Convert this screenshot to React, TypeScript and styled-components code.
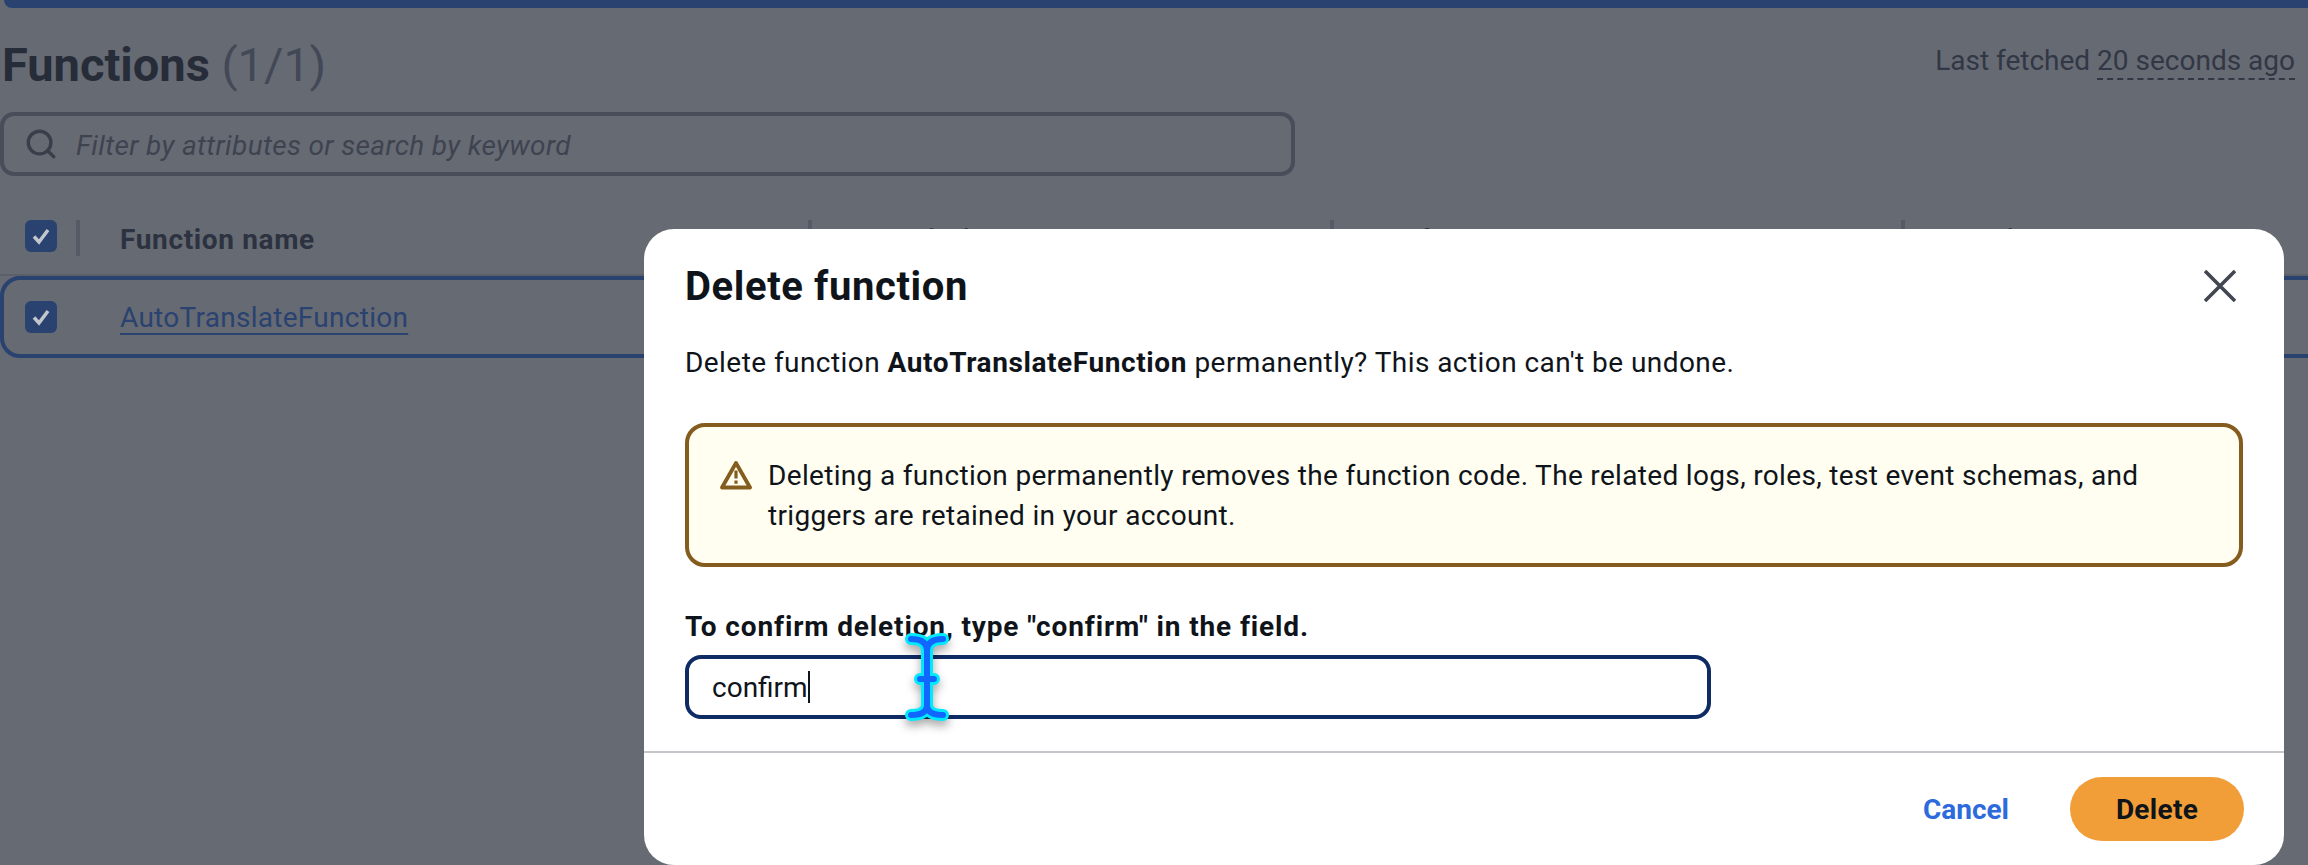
import styled, { createGlobalStyle } from 'styled-components';
import { Search } from 'lucide-react';

const GlobalStyle = createGlobalStyle`
  html, body {
    margin: 0;
    padding: 0;
    background: #666a73;
  }
  * {
    box-sizing: border-box;
  }
`;

const Page = styled.div`
  position: relative;
  width: 2308px;
  height: 865px;
  overflow: hidden;
  background: #666a73;
  font-family: Roboto, "Noto Sans", sans-serif;
  font-size: 28px;
  color: #16191f;
`;

const TopBar = styled.div`
  height: 8px;
  margin-left: 4px;
  background: #2a4270;
  border-bottom-left-radius: 8px;
`;

const HeaderRow = styled.div`
  display: flex;
  justify-content: space-between;
  align-items: flex-start;
  height: 104px;
  padding: 32px 13px 0 2px;
`;

const PageTitle = styled.h1`
  margin: 0;
  font-size: 47px;
  line-height: 50px;
  font-weight: 700;
  color: #262c38;
`;

const Count = styled.span`
  font-weight: 400;
  color: #434856;
`;

const Fetched = styled.div`
  padding-top: 1px;
  line-height: 40px;
  color: #323745;
`;

const Dashed = styled.span`
  border-bottom: 2px dashed #323745;
  padding-bottom: 1px;
`;

const SearchBox = styled.div`
  display: flex;
  align-items: center;
  gap: 18px;
  width: 1295px;
  height: 64px;
  padding: 0 20px;
  border: 4px solid #494d59;
  border-radius: 14px;
  svg {
    color: #3a3e4a;
    flex: none;
  }
`;

const Placeholder = styled.span`
  padding-top: 2px;
  font-style: italic;
  letter-spacing: 0.35px;
  color: #3f4350;
`;

const HeadRow = styled.div`
  display: grid;
  grid-template-columns: 76px 732px 522px 571px 1fr;
  height: 56px;
  margin-top: 44px;
  border-bottom: 2px solid #5b5f68;
`;

const HeadCell = styled.div`
  height: 36px;
  padding-left: 40px;
  border-left: 4px solid #565a66;
  font-weight: 700;
  line-height: 39px;
  letter-spacing: 0.65px;
  color: #2c3240;
`;

const CheckCell = styled.div`
  padding-left: 25px;
`;

const Check = styled.div`
  display: flex;
  align-items: center;
  justify-content: center;
  width: 32px;
  height: 32px;
  border-radius: 6px;
  background: #2a4270;
`;

const SelectedRow = styled.div`
  display: flex;
  align-items: center;
  height: 82px;
  margin-right: -20px;
  padding-left: 25px;
  border: 4px solid #2a4270;
  border-radius: 20px;
`;

const RowCheck = styled(Check)`
  margin-left: -4px;
  margin-right: 63px;
`;

const FnLink = styled.a`
  color: #2a4270;
  letter-spacing: 0.28px;
  text-decoration: underline;
  text-underline-offset: 6px;
  text-decoration-thickness: 2px;
`;

const Modal = styled.div`
  position: absolute;
  left: 644px;
  top: 229px;
  width: 1640px;
  height: 636px;
  display: flex;
  flex-direction: column;
  background: #fff;
  border-radius: 30px;
`;

const ModalHead = styled.div`
  display: flex;
  justify-content: space-between;
  align-items: center;
  height: 114px;
  padding: 0 48px 0 41px;
`;

const ModalTitle = styled.h2`
  margin: 0;
  font-size: 40px;
  font-weight: 700;
  letter-spacing: 0.6px;
  color: #0f141a;
`;

const ModalBody = styled.div`
  flex: 1;
  padding: 0 41px;
  color: #0f141a;
`;

const Lead = styled.p`
  margin: 0;
  line-height: 40px;
  letter-spacing: 0.44px;
  b {
    letter-spacing: 0.6px;
  }
`;

const Warning = styled.div`
  display: flex;
  gap: 16px;
  height: 144px;
  margin-top: 40px;
  padding: 29px 32px 0 31px;
  border: 4px solid #835c1e;
  border-radius: 20px;
  background: #fffef0;
  line-height: 40px;
  letter-spacing: 0.33px;
  svg {
    flex: none;
    margin-top: 4px;
  }
`;

const FieldLabel = styled.label`
  display: block;
  margin-top: 40px;
  font-weight: 700;
  line-height: 40px;
  letter-spacing: 0.86px;
`;

const Field = styled.div`
  display: flex;
  align-items: center;
  width: 1026px;
  height: 64px;
  margin-top: 8px;
  padding: 0 23px;
  border: 4px solid #0f2b64;
  border-radius: 16px;
`;

const Caret = styled.span`
  display: inline-block;
  width: 2px;
  height: 32px;
  background: #0f141a;
`;

const ModalFoot = styled.div`
  display: flex;
  justify-content: flex-end;
  align-items: center;
  gap: 61px;
  height: 114px;
  padding-right: 40px;
  border-top: 2px solid #c6c6cd;
`;

const CancelLink = styled.a`
  font-weight: 700;
  color: #2d6bdd;
`;

const DeleteButton = styled.button`
  width: 174px;
  height: 64px;
  border: none;
  border-radius: 32px;
  background: #f29e38;
  color: #0f141a;
  font: inherit;
  font-weight: 700;
  letter-spacing: 0.3px;
`;

const CursorMark = styled.svg`
  position: absolute;
  left: 904px;
  top: 631px;
  filter: drop-shadow(0 5px 5px rgba(0, 0, 0, 0.35));
`;

const cursorPath =
  'M7 8C15 8 23 10 23 20C23 10 31 8 39 8M23 20V74M7 84C15 84 23 82 23 74C23 82 31 84 39 84M16 48H30';

const CheckMark = () => (
  <svg width="20" height="20" viewBox="0 0 20 20" fill="none">
    <path d="M3 10.5L8 16L17 4" stroke="#c3c6cc" strokeWidth="3.5" />
  </svg>
);

const CloseIcon = () => (
  <svg width="32" height="32" viewBox="0 0 32 32" fill="none">
    <path d="M1 1L31 31M31 1L1 31" stroke="#424650" strokeWidth="3.6" />
  </svg>
);

const WarnIcon = () => (
  <svg width="32" height="30" viewBox="0 0 32 30" fill="none">
    <path d="M16 3L30 27.5H2Z" stroke="#835c1e" strokeWidth="3.8" strokeLinejoin="round" />
    <path d="M14.4 10.5H17.6V18.5H14.4ZM14.4 20.5H17.6V23.7H14.4Z" fill="#835c1e" />
  </svg>
);

export default function App() {
  return (
    <Page>
      <GlobalStyle />
      <TopBar />
      <HeaderRow>
        <PageTitle>
          Functions <Count>(1/1)</Count>
        </PageTitle>
        <Fetched>
          Last fetched <Dashed>20 seconds ago</Dashed>
        </Fetched>
      </HeaderRow>
      <SearchBox>
        <Search size={34} strokeWidth={2.4} />
        <Placeholder>Filter by attributes or search by keyword</Placeholder>
      </SearchBox>
      <HeadRow>
        <CheckCell>
          <Check>
            <CheckMark />
          </Check>
        </CheckCell>
        <HeadCell>Function name</HeadCell>
        <HeadCell>Description</HeadCell>
        <HeadCell>Package type</HeadCell>
        <HeadCell>Runtime</HeadCell>
      </HeadRow>
      <SelectedRow>
        <RowCheck>
          <CheckMark />
        </RowCheck>
        <FnLink>AutoTranslateFunction</FnLink>
      </SelectedRow>

      <Modal>
        <ModalHead>
          <ModalTitle>Delete function</ModalTitle>
          <CloseIcon />
        </ModalHead>
        <ModalBody>
          <Lead>
            Delete function <b>AutoTranslateFunction</b> permanently? This action can't be undone.
          </Lead>
          <Warning>
            <WarnIcon />
            <div>
              Deleting a function permanently removes the function code. The related logs, roles, test event schemas, and
              <br />
              triggers are retained in your account.
            </div>
          </Warning>
          <FieldLabel>To confirm deletion, type "confirm" in the field.</FieldLabel>
          <Field>
            confirm
            <Caret />
          </Field>
        </ModalBody>
        <ModalFoot>
          <CancelLink>Cancel</CancelLink>
          <DeleteButton>Delete</DeleteButton>
        </ModalFoot>
      </Modal>

      <CursorMark width="46" height="92" viewBox="0 0 46 92" fill="none" strokeLinecap="round">
        <path d={cursorPath} stroke="#00eaff" strokeWidth="12" />
        <path d={cursorPath} stroke="#1166ff" strokeWidth="6" />
      </CursorMark>
    </Page>
  );
}
